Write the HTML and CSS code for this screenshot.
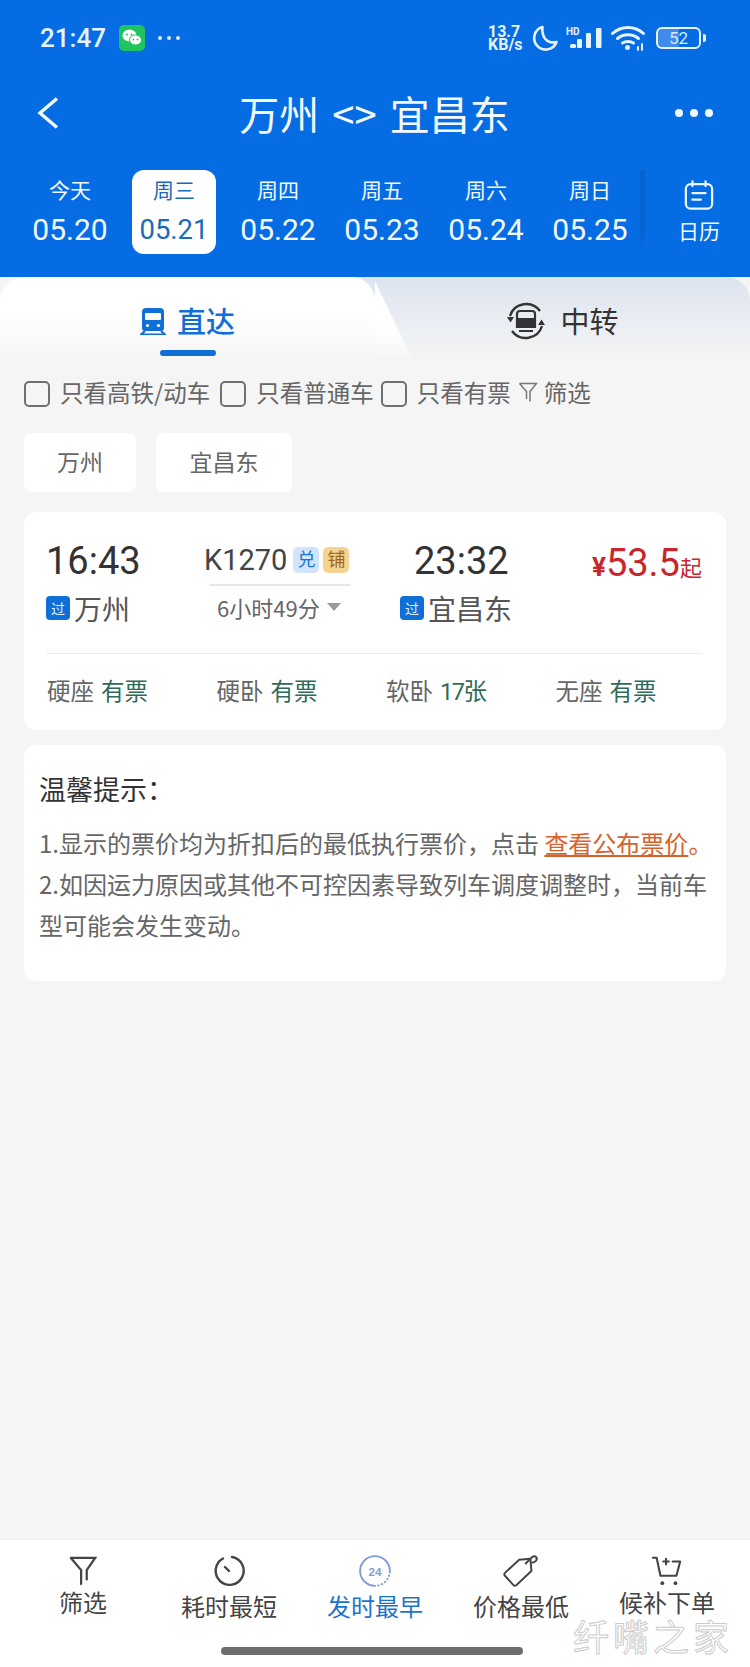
FILE: index.html
```html
<!DOCTYPE html>
<html lang="zh-CN">
<head>
  <meta charset="UTF-8">
  <title>万州 &lt;&gt; 宜昌东</title>
  <link rel="stylesheet" href="styles.css">
</head>
<body>
  <div class="page">
    <header class="top">
      <div class="status">
        <div class="status-left">
          <span class="clock">21:47</span>
          <span class="wechat">
            <svg width="26" height="26" viewBox="0 0 26 26"><rect width="26" height="26" rx="5" fill="#1fc45e"/><ellipse cx="10.5" cy="10.5" rx="7" ry="6" fill="#fff"/><ellipse cx="16.5" cy="15" rx="6" ry="5" fill="#fff" stroke="#1fc45e"/><circle cx="8" cy="9.5" r="1" fill="#1fc45e"/><circle cx="12.5" cy="9.5" r="1" fill="#1fc45e"/><circle cx="14.5" cy="14.5" r=".9" fill="#1fc45e"/><circle cx="18.5" cy="14.5" r=".9" fill="#1fc45e"/></svg>
          </span>
          <span class="status-dots"><i></i><i></i><i></i></span>
        </div>
        <div class="status-right">
          <span class="speed">13.7<br>KB/s</span>
          <svg class="moon" width="26" height="26" viewBox="0 0 26 26"><path d="M10.500 2a11.500 11.500 0 1 0 14 15c-6.500 1.500-12-1.500-13.500-7.500-.7-2.700-.9-5 -.5-7.500z" fill="none" stroke="#e6f3ff" stroke-width="2.600" stroke-linejoin="round"/></svg>
          <span class="signal">
            <span class="hd">HD</span>
            <svg width="36" height="22" viewBox="0 0 36 22"><rect x="4" y="17" width="6" height="4" rx="1.500" fill="#e6f3ff"/><rect x="11" y="12" width="5" height="9" rx="1" fill="#e6f3ff"/><rect x="20" y="6" width="5" height="15" rx="1" fill="#e6f3ff"/><rect x="30" y="1" width="5.500" height="20" rx="1" fill="#e6f3ff"/></svg>
          </span>
          <svg class="wifi" width="34" height="26" viewBox="0 0 34 26" fill="none" stroke="#e6f3ff" stroke-width="3" stroke-linecap="round"><path d="M1.500 8.500c9-8 22-8 31 0"/><path d="M6.500 13.500c6-5 15-5 21 0"/><path d="M11.500 18c3-2 8-2 11 0"/><circle cx="16.500" cy="22.500" r="2.500" fill="#e6f3ff" stroke="none"/><path d="M27 25v-3M31 25v-6" stroke-width="2"/></svg>
          <span class="battery"><span class="battery-num">52</span></span>
          <span class="battery-tip"></span>
        </div>
      </div>

      <div class="nav">
        <svg class="nav-back" width="26" height="36" viewBox="0 0 26 36"><path d="M21 3.500 4 18l17 14.500" fill="none" stroke="#f2f9ff" stroke-width="3.400"/></svg>
        <h1 class="nav-title">万州 &lt;&gt; 宜昌东</h1>
        <span class="nav-more"><i></i><i></i><i></i></span>
      </div>

      <div class="dates">
        <div class="date"><span class="date-week">今天</span><span class="date-day">05.20</span></div>
        <div class="date active"><span class="date-week">周三</span><span class="date-day">05.21</span></div>
        <div class="date"><span class="date-week">周四</span><span class="date-day">05.22</span></div>
        <div class="date"><span class="date-week">周五</span><span class="date-day">05.23</span></div>
        <div class="date"><span class="date-week">周六</span><span class="date-day">05.24</span></div>
        <div class="date"><span class="date-week">周日</span><span class="date-day">05.25</span></div>
        <div class="calendar">
          <svg width="30" height="30" viewBox="0 0 32 32" fill="none" stroke="#eaf5ff" stroke-width="2.400" stroke-linecap="round"><rect x="2" y="4.500" width="28" height="26" rx="5"/><path d="M9 1.500v5M23 1.500v5M9 14h14M9 21h9"/></svg>
          <span>日历</span>
        </div>
      </div>
    </header>

    <main class="body">
      <div class="tabs">
        <div class="tab tab-on">
          <svg width="26" height="28" viewBox="0 0 26 28"><path d="M6 1h14a4 4 0 0 1 4 4v16a3 3 0 0 1-3 3H5a3 3 0 0 1-3-3V5a4 4 0 0 1 4-4z" fill="#0f6fd6"/><rect x="5" y="6" width="16" height="7" rx="1" fill="#fff"/><circle cx="7.500" cy="18.500" r="1.600" fill="#fff"/><circle cx="18.500" cy="18.500" r="1.600" fill="#fff"/><path d="M5 24 1 27.500h24L21 24" fill="none" stroke="#0f6fd6" stroke-width="2"/></svg>
          <span>直达</span>
          <i class="tab-bar"></i>
        </div>
        <div class="tab tab-off">
          <svg width="40" height="40" viewBox="0 0 40 40" fill="none"><path d="M4 15A17 17 0 0 1 34 10M36 25A17 17 0 0 1 6 30" stroke="#333" stroke-width="2.400"/><path d="M1 16h7l-3.500 5.500zM39 24h-7l3.500-5.500z" fill="#333"/><path d="M14 10h12a3 3 0 0 1 3 3v13H11V13a3 3 0 0 1 3-3z" fill="none" stroke="#333" stroke-width="2.200"/><rect x="11" y="17" width="18" height="9" fill="#333"/><path d="M13 30h14" stroke="#333" stroke-width="2"/></svg>
          <span>中转</span>
        </div>
      </div>

      <div class="filters">
        <span class="check"><i></i>只看高铁/动车</span>
        <span class="check check-tight"><i></i>只看普通车</span>
        <span class="check check-tight"><i></i>只看有票</span>
        <span class="filter-link">
          <svg width="20" height="24" viewBox="0 0 20 24" fill="none" stroke="#777" stroke-width="1.500"><path d="M1.500 3.500h17l-6.500 8v10M8.500 19v-7.500l-7-8"/></svg>筛选
        </span>
      </div>

      <div class="chips">
        <span class="chip">万州</span>
        <span class="chip chip-wide">宜昌东</span>
      </div>

      <section class="card train">
        <div class="train-main">
          <div class="stop stop-from">
            <div class="stop-time">16:43</div>
            <div class="stop-name"><b class="pass">过</b>万州</div>
          </div>
          <div class="route">
            <div class="route-no">K1270<b class="tag tag-blue">兑</b><b class="tag tag-amber">铺</b></div>
            <div class="route-line"></div>
            <div class="route-dur">6小时49分<i class="caret"></i></div>
          </div>
          <div class="stop stop-to">
            <div class="stop-time">23:32</div>
            <div class="stop-name"><b class="pass">过</b>宜昌东</div>
          </div>
          <div class="price"><small>¥</small>53.5<em>起</em></div>
        </div>
        <div class="seats">
          <span>硬座<b>有票</b></span>
          <span>硬卧<b>有票</b></span>
          <span>软卧<b class="seat-count">17张</b></span>
          <span>无座<b>有票</b></span>
        </div>
      </section>

      <section class="card notice">
        <h3>温馨提示：</h3>
        <p>1.显示的票价均为折扣后的最低执行票价，点击 <a>查看公布票价</a><span class="link-end">。</span></p>
        <p>2.如因运力原因或其他不可控因素导致列车调度调整时，当前车型可能会发生变动。</p>
      </section>
    </main>

    <footer class="bottom">
      <div class="sort">
        <svg width="28" height="32" viewBox="0 0 30 32" fill="none" stroke="#444" stroke-width="2.400" stroke-linecap="round"><path d="M2 2h26l-9 13v10M13 30V15L2 2"/></svg>
        <span>筛选</span>
      </div>
      <div class="sort sort-low">
        <svg width="32" height="32" viewBox="0 0 32 32" fill="none" stroke="#444" stroke-width="2.400" stroke-linecap="round"><path d="M10 3.500A14 14 0 1 0 19 2M12 12l4 4"/></svg>
        <span>耗时最短</span>
      </div>
      <div class="sort sort-low on">
        <svg width="34" height="34" viewBox="0 0 32 32" fill="none"><path d="M16 2a14 14 0 0 1 14 14" stroke="#7e9fd6" stroke-width="1.800"/><path d="M30 16A14 14 0 0 1 16 30" stroke="#7e9fd6" stroke-width="1.800" stroke-dasharray="2 1.500"/><path d="M16 30A14 14 0 0 1 16 2" stroke="#7e9fd6" stroke-width="1.800"/><text x="16" y="20.500" text-anchor="middle" class="clock-num">24</text></svg>
        <span>发时最早</span>
      </div>
      <div class="sort sort-low">
        <svg width="38" height="34" viewBox="0 0 40 36" fill="none" stroke="#444" stroke-width="2.100" stroke-linejoin="round" stroke-linecap="round"><path d="M3 20 18 6l12-1 1 13-16 15a2 2 0 0 1-3 0L3 23a2 2 0 0 1 0-3z"/><path d="M25 10c3-3 5-5 7-7 3-2 6 1 4 4-1 1-2 2-4 2"/></svg>
        <span>价格最低</span>
      </div>
      <div class="sort">
        <svg width="32" height="32" viewBox="0 0 34 34" fill="none" stroke="#444" stroke-width="2.200" stroke-linecap="round"><path d="M2 3h4l4 19h17l4-15h-8M13 7h6M16 4v6" stroke-linejoin="round"/><circle cx="12" cy="30" r="2" fill="#444" stroke="none"/><circle cx="26" cy="30" r="2" fill="#444" stroke="none"/></svg>
        <span>候补下单</span>
      </div>
      <div class="home-bar"></div>
      <div class="mark">纤嘴之家</div>
    </footer>
  </div>
</body>
</html>
```

FILE: styles.css
```css
* { box-sizing: border-box; }
html, body { margin: 0; padding: 0; }
body { font-family: "Noto Sans CJK SC", Roboto, "Noto Sans", sans-serif; background: #f5f5f5; color: #333; }
i, em { font-style: normal; }
.page { width: 750px; height: 1667px; display: flex; flex-direction: column; overflow: hidden; }

/* header */
.top { height: 277px; background: #056ce4; color: #f2f9ff; flex: none; }
.status { height: 76px; padding: 0 44px 0 40px; display: flex; justify-content: space-between; align-items: center; }
.status-left { display: flex; align-items: center; }
.clock { font-family: Roboto, sans-serif; font-size: 26px; font-weight: 500; color: #e6f3ff; width: 79px; }
.wechat { display: flex; }
.status-dots { display: flex; gap: 5px; margin-left: 13px; }
.status-dots i { width: 4px; height: 4px; border-radius: 50%; background: #dcedff; }
.status-right { display: flex; align-items: center; color: #e6f3ff; }
.speed { font-family: Roboto, sans-serif; font-size: 16px; font-weight: 700; line-height: 13px; width: 37px; }
.moon { margin-left: 7px; }
.signal { position: relative; margin-left: 8px; display: flex; }
.hd { position: absolute; left: 0; top: 0; font-family: Roboto, sans-serif; font-size: 10px; font-weight: 700; line-height: 10px; }
.wifi { margin-left: 9px; }
.battery { width: 45px; height: 22px; margin-left: 11px; border: 2px solid #e6f3ff; border-radius: 6px; background: linear-gradient(90deg, #3f8ceb 0 52%, transparent 52%); display: flex; align-items: center; justify-content: center; }
.battery-num { font-family: Roboto, sans-serif; font-size: 17px; line-height: 18px; color: #d8ebff; }
.battery-tip { width: 3px; height: 8px; margin-left: 2px; background: #e6f3ff; border-radius: 0 2px 2px 0; }

.nav { height: 78px; padding: 0 37px 4px 36px; display: grid; grid-template-columns: 60px 1fr 60px; align-items: center; }
.nav-title { margin: 0; font-size: 40px; font-weight: 400; line-height: 50px; word-spacing: 4px; text-align: center; }
.nav-more { display: flex; gap: 7px; justify-self: end; }
.nav-more i { width: 8px; height: 8px; border-radius: 50%; background: #f2f9ff; }

.dates { height: 84px; margin-top: 16px; padding-left: 22px; display: flex; }
.date { width: 96px; margin-right: 8px; height: 84px; padding-top: 4px; display: flex; flex-direction: column; align-items: center; border-radius: 12px; }
.date:nth-child(2) { width: 84px; margin-right: 14px; }
.date:first-child { margin-right: 14px; }
.date-week { font-size: 21px; line-height: 31px; }
.date-day { font-family: Roboto, sans-serif; font-size: 30px; line-height: 38px; margin-top: 6px; }
.active { background: #fff; color: #1b6bb8; }
.active .date-day { font-size: 27.500px; }
.calendar { position: relative; margin-left: 14px; width: 78px; padding-top: 10px; display: flex; flex-direction: column; align-items: center; font-size: 21px; line-height: 30px; }
.calendar::before { content: ""; position: absolute; left: -20px; top: 0; width: 5px; height: 84px; background: linear-gradient(#0563d2, #0563d2 75%, #056ce4); }
.calendar svg { margin-bottom: 5px; }

/* tabs */
.body { flex: 1; position: relative; }
.tabs { height: 84px; display: flex; background: linear-gradient(#dde4ef, #f5f5f5); border-radius: 24px 24px 0 0; position: relative; }
.tab { display: flex; align-items: center; justify-content: center; gap: 11px; font-size: 29px; position: relative; }
.tab-on { width: 375px; color: #0f6fd6; font-weight: 500; background: linear-gradient(#fff, #fff 45%, #f5f5f5); border-radius: 24px 24px 0 0; }
.tab-on span { position: relative; top: 1px; }
.tab-off span { position: relative; top: 1px; }
.tab-on svg, .tab-off svg { position: relative; top: 2px; }
.tab-on::after { content: ""; position: absolute; right: -38px; top: 4px; width: 38px; height: 80px; background: linear-gradient(#fff, #fff 55%, #f5f5f5); clip-path: polygon(0 0, 100% 100%, 0 100%); }
.tab-off { flex: 1; color: #333; gap: 14px; }
.tab-bar { position: absolute; left: 160px; top: 73px; width: 56px; height: 6px; border-radius: 3px; background: #0f6fd6; }

/* filter row */
.filters { height: 34px; margin-top: 14px; padding-left: 24px; display: flex; align-items: center; font-size: 23.500px; color: #666; }
.check { display: flex; align-items: center; margin-right: 10px; }
.check-tight { margin-right: 7px; }
.check i { width: 26px; height: 26px; margin-top: 3px; border: 2px solid #707070; border-radius: 5px; margin-right: 10px; }
.filter-link { display: flex; align-items: center; gap: 6px; }

.chips { margin-top: 24px; padding-left: 24px; display: flex; gap: 20px; }
.chip { width: 112px; height: 59px; padding-bottom: 4px; background: #fff; border-radius: 8px; display: flex; align-items: center; justify-content: center; font-size: 23px; color: #666; }
.chip-wide { width: 136px; }

/* train card */
.card { margin: 0 24px; background: #fff; border-radius: 12px; }
.train { margin-top: 20px; height: 218px; padding: 0 24px 0 22px; }
.train-main { height: 142px; display: flex; border-bottom: 1px solid #ececec; position: relative; }
.stop { position: absolute; top: 25px; }
.stop-from { left: 0; }
.stop-to { left: 354px; }
.stop-time { font-family: Roboto, sans-serif; font-size: 38px; line-height: 48px; color: #333; }
.stop-to .stop-time { margin-left: 14px; }
.stop-name { display: flex; align-items: center; font-size: 28px; line-height: 44px; color: #555; gap: 4px; margin-top: 1px; }
.pass { width: 24px; height: 24px; border-radius: 4px; background: #0f6fd6; color: #dff0ff; font-size: 14px; font-weight: 400; line-height: 24px; text-align: center; }
.route { position: absolute; left: 158px; top: 30px; width: 148px; }
.route-no { display: flex; align-items: center; font-family: Roboto, "Noto Sans CJK SC", sans-serif; font-size: 29px; line-height: 36px; color: #444; }
.tag { width: 26px; height: 26px; border-radius: 5px; font-size: 18px; font-weight: 400; line-height: 26px; text-align: center; margin-left: 4px; }
.route-no .tag:first-of-type { margin-left: 6px; }
.tag-blue { background: #d2e4f9; color: #1b74d4; }
.tag-amber { background: #f5d491; color: #a0691a; }
.route-line { height: 2px; margin: 6px 1px 0 5px; background: #e6e6e6; border-radius: 1px; }
.route-dur { display: flex; align-items: center; padding-left: 13px; font-size: 22px; line-height: 34px; color: #666; margin-top: 4px; }
.caret { margin-left: 7px; border: 7px solid transparent; border-top: 8px solid #999; border-bottom: 0; }
.price { position: absolute; right: 0; top: 29px; color: #c9252d; font-family: Roboto, sans-serif; font-size: 38px; line-height: 44px; }
.price small { font-size: 26px; font-weight: 700; }
.price em { font-family: "Noto Sans CJK SC", sans-serif; font-size: 22px; }
.seats { display: flex; padding: 0 0 4px 1px; height: 75px; align-items: center; font-size: 23.500px; color: #666; }
.seats span { flex: none; width: 169.500px; }
.seats b { font-weight: 400; color: #2f6b58; margin-left: 7px; }
.seats .seat-count { font-family: Roboto, "Noto Sans CJK SC", sans-serif; letter-spacing: -1.500px; }

/* notice */
.notice { margin-top: 15px; height: 236px; padding: 26px 4px 0 15px; }
.notice h3 { margin: 0 0 15px; font-size: 27px; font-weight: 400; line-height: 36px; color: #333; }
.notice p { margin: 0; font-size: 24px; line-height: 41px; color: #666; }
.notice a { color: #d8622a; text-decoration: underline; }
.link-end { color: #d8622a; }

/* bottom bar */
.bottom { height: 128px; flex: none; padding: 0 10px; background: #fff; border-top: 1px solid #eee; display: flex; position: relative; }
.sort { width: 146px; display: flex; flex-direction: column; align-items: center; padding-top: 14px; font-size: 24px; color: #444; }
.sort svg { height: 34px; }
.sort span { line-height: 32px; margin-top: -2px; white-space: nowrap; }
.sort-low span { margin-top: 2px; }
.on span { color: #1a74cc; }
.clock-num { font-family: "Liberation Sans", sans-serif; font-size: 11px; font-weight: 700; fill: #7e9fd6; }
.home-bar { position: absolute; left: 221px; bottom: 12px; width: 302px; height: 8px; border-radius: 4px; background: #6d6d6d; }
.mark { position: absolute; right: 17px; bottom: 14px; font-size: 36px; line-height: 36px; letter-spacing: 4px; color: #fff; -webkit-text-stroke: 1px #ccc; }
```
